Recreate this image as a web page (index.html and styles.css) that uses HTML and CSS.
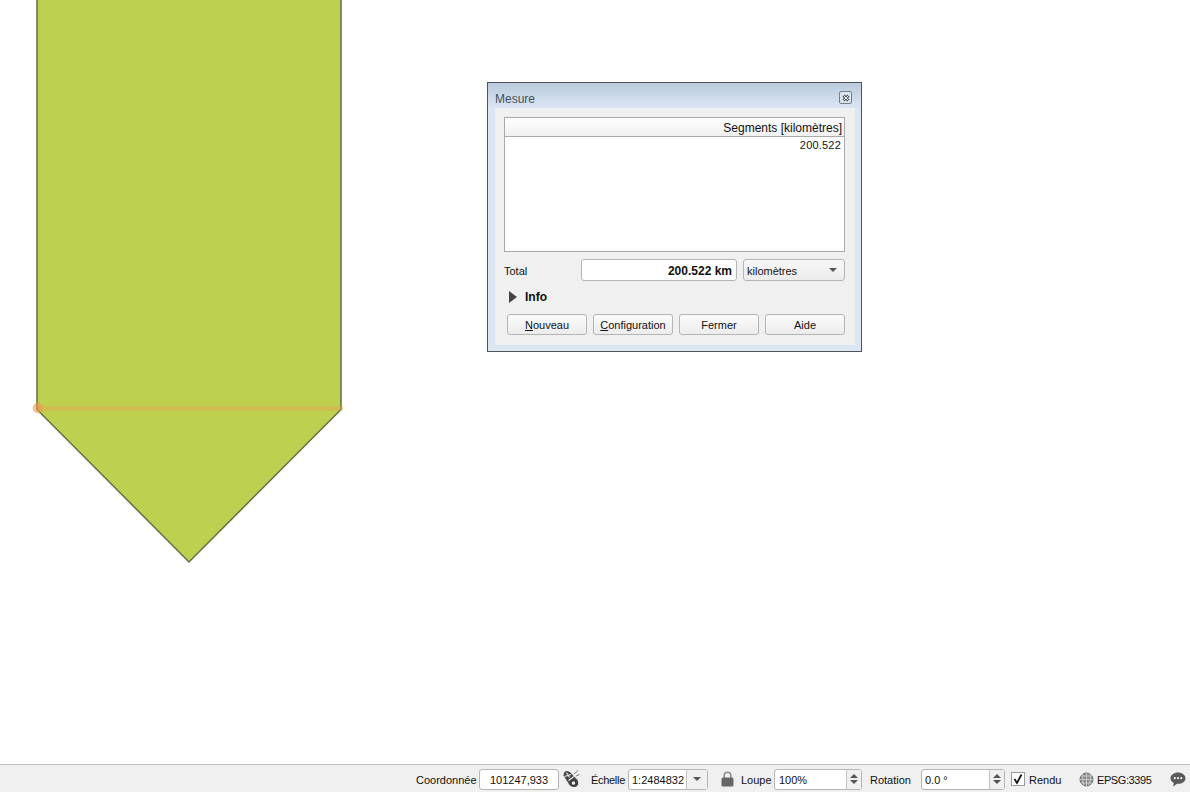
FILE: index.html
```html
<!DOCTYPE html>
<html lang="fr">
    <head>
        <meta charset="UTF-8">
        <meta name="viewport" content="width=device-width, initial-scale=1.0">
        <title>Mesure</title>
        <link rel="stylesheet" href="styles.css">
    </head>
    <body>
        <div class="canvas">
            <svg class="map" width="1190" height="764" viewBox="0 0 1190 764">
                <polygon points="37,-5 341,-5 341,409.500 189,562 37,409.500" fill="#bed04f" stroke="#666c45" stroke-width="1.500"/>
                <line x1="38" y1="408.500" x2="343" y2="408.500" stroke="#ed9b50" stroke-opacity="0.4" stroke-width="4"/>
                <circle cx="38" cy="408" r="5" fill="#ed9b50" fill-opacity="0.6" stroke="#ed9b50" stroke-opacity="0.4" stroke-width="1"/>
            </svg>

            <div class="window">
                <div class="titlebar">
                    <span class="title">Mesure</span>
                    <span class="close-btn">
                        <svg width="8" height="8" viewBox="0 0 8 8">
                            <path d="M1.500 1.500L6.500 6.500M6.500 1.500L1.500 6.500" stroke="#4f5a67" stroke-width="3"/>
                            <path d="M1.500 1.500L6.500 6.500M6.500 1.500L1.500 6.500" stroke="#f4f6f8" stroke-width="1"/>
                        </svg>
                    </span>
                </div>
                <div class="panel">
                    <div class="table">
                        <div class="table-head">Segments [kilomètres]</div>
                        <div class="table-row">200.522</div>
                    </div>
                    <div class="total-row">
                        <span class="total-label">Total</span>
                        <div class="total-value">200.522 km</div>
                        <div class="unit-combo">
                            <span>kilomètres</span>
                            <span class="arrow-down"></span>
                        </div>
                    </div>
                    <div class="info-row">
                        <span class="arrow-right"></span>
                        <span class="info-label">Info</span>
                    </div>
                    <div class="buttons">
                        <div class="btn"><span><u>N</u>ouveau</span></div>
                        <div class="btn"><span><u>C</u>onfiguration</span></div>
                        <div class="btn">Fermer</div>
                        <div class="btn">Aide</div>
                    </div>
                </div>
            </div>
        </div>

        <div class="statusbar">
            <span class="lbl lbl-coord">Coordonnée</span>
            <div class="field field-coord">101247,933</div>
            <svg class="icon icon-mouse" width="17" height="18" viewBox="0 0 17 18">
                <path d="M0.500 5.500Q0.500 2 3 1Q5.500 0.500 7.500 2.500L14.500 10Q16.500 14.500 13.500 16.500Q9 18 6.500 15Z" fill="#484848"/>
                <path d="M3.500 2.500L6.500 7.500M1.500 6.500L8 4.500M5.500 10.500L11 6.500" stroke="#e8e8e8" stroke-width="1.100" fill="none"/>
                <circle cx="10.500" cy="13" r="2.400" fill="#ececec" stroke="#333" stroke-width="1.100"/>
                <path d="M11 4L15 0.500M13 6L16.500 4.500" stroke="#777" stroke-width="1"/>
            </svg>
            <span class="lbl lbl-scale">Échelle</span>
            <div class="field field-scale">
                <span class="field-text">1:2484832</span>
                <span class="drop"><span class="arrow-down"></span></span>
            </div>
            <svg class="icon icon-lock" width="13" height="16" viewBox="0 0 13 16">
                <path d="M3.200 7V4.500a3.300 3.300 0 0 1 6.600 0V7" fill="none" stroke="#8a8a8a" stroke-width="1.600"/>
                <rect x="0.500" y="6.500" width="12" height="9" rx="1.500" fill="#666"/>
            </svg>
            <span class="lbl lbl-zoom">Loupe</span>
            <div class="field field-zoom">
                <span class="field-text">100%</span>
                <span class="spin"><span class="arrow-up"></span><span class="arrow-down"></span></span>
            </div>
            <span class="lbl lbl-rot">Rotation</span>
            <div class="field field-rot">
                <span class="field-text">0.0 °</span>
                <span class="spin"><span class="arrow-up"></span><span class="arrow-down"></span></span>
            </div>
            <span class="check">
                <svg width="12" height="12" viewBox="0 0 12 12"><path d="M2.500 6L5 10L9.500 1.500" fill="none" stroke="#111" stroke-width="1.700"/></svg>
            </span>
            <span class="lbl lbl-render">Rendu</span>
            <svg class="icon icon-globe" width="15" height="15" viewBox="0 0 15 15">
                <circle cx="7.500" cy="7.500" r="6.500" fill="#8c8c8c" stroke="#707070"/>
                <path d="M1 7.500H14M2 4H13M2 11H13M7.500 1V14M4 2Q2.500 7.500 5 13.500M11 2Q12.500 7.500 10 13.500" stroke="#dcdcdc" stroke-width="0.700" fill="none"/>
            </svg>
            <span class="lbl lbl-epsg">EPSG:3395</span>
            <svg class="icon icon-msg" width="16" height="15" viewBox="0 0 16 15">
                <path d="M8 0.500C3.800 0.500 0.500 3 0.500 6.200C0.500 8.200 1.800 9.900 3.800 10.900L3 14.500L7.200 11.800H8C12.200 11.800 15.500 9.400 15.500 6.200C15.500 3 12.200 0.500 8 0.500Z" fill="#5a5a5a"/>
                <circle cx="4.800" cy="6.200" r="1.100" fill="#f0f0f0"/>
                <circle cx="8" cy="6.200" r="1.100" fill="#f0f0f0"/>
                <circle cx="11.200" cy="6.200" r="1.100" fill="#f0f0f0"/>
            </svg>
        </div>
    </body>
</html>
```

FILE: styles.css
```css
* {
    box-sizing: border-box;
}

html, body {
    height: 100%;
}

body {
    margin: 0;
    display: flex;
    flex-direction: column;
    overflow: hidden;
    background-color: #fff;
    color: #111;
    font-family: "Liberation Sans", Arial, sans-serif;
    font-size: 11px;
}

.canvas {
    position: relative;
    height: 764px;
    flex: none;
}

.map {
    position: absolute;
    left: 0;
    top: 0;
}

/* floating dialog */
.window {
    position: absolute;
    left: 487px;
    top: 82px;
    width: 375px;
    height: 270px;
    border: 1px solid #4f5459;
    background-color: #dbe6f3;
    display: flex;
    flex-direction: column;
}

.titlebar {
    height: 25px;
    flex: none;
    display: flex;
    align-items: center;
    justify-content: space-between;
    padding: 8px 10px 2px 7px;
    background: linear-gradient(#b9cbdd, #dbe6f3);
}

.title {
    color: #47515c;
    font-size: 12px;
}

.close-btn {
    width: 13px;
    height: 13px;
    margin-top: -2px;
    margin-right: -1px;
    display: flex;
    align-items: center;
    justify-content: center;
    border: 1px solid #75808c;
    border-radius: 2px;
    background-color: #dbe4ee;
}

.panel {
    flex: 1;
    margin: 0 6px 6px 7px;
    padding: 9px 10px 10px 9px;
    background-color: #f0f0f0;
    display: flex;
    flex-direction: column;
}

.table {
    height: 135px;
    flex: none;
    border: 1px solid #a9a9a9;
    background-color: #fff;
}

.table-head {
    height: 19px;
    padding: 3px 2px 0 0;
    border-bottom: 1px solid #a9a9a9;
    background: linear-gradient(#fff, #f0f0f0);
    text-align: right;
    font-size: 12px;
}

.table-row {
    padding: 1px 3px 0 0;
    text-align: right;
    font-size: 11px;
    letter-spacing: 0.200px;
    line-height: 15px;
}

.total-row {
    display: flex;
    align-items: center;
    height: 22px;
    margin-top: 7px;
}

.total-label {
    width: 77px;
    padding-top: 2px;
}

.total-value {
    width: 156px;
    height: 22px;
    margin-right: 6px;
    padding: 1px 4px 0 0;
    border: 1px solid #b5b5b5;
    border-radius: 3px;
    background-color: #fff;
    text-align: right;
    font-weight: bold;
    font-size: 12px;
    line-height: 20px;
}

.unit-combo {
    width: 102px;
    height: 22px;
    padding: 2px 7px 0 3px;
    border: 1px solid #b5b5b5;
    border-radius: 3px;
    background: linear-gradient(#f8f8f8, #ececec);
    display: flex;
    align-items: center;
    justify-content: space-between;
}

.arrow-down {
    display: block;
    width: 0;
    height: 0;
    border-left: 4.500px solid transparent;
    border-right: 4.500px solid transparent;
    border-top: 4px solid #555;
}

.arrow-up {
    display: block;
    width: 0;
    height: 0;
    border-left: 4.500px solid transparent;
    border-right: 4.500px solid transparent;
    border-bottom: 4px solid #555;
}

.unit-combo .arrow-down {
    margin-top: -2px;
}

.arrow-right {
    display: block;
    width: 0;
    height: 0;
    margin-left: 5px;
    border-top: 6px solid transparent;
    border-bottom: 6px solid transparent;
    border-left: 8px solid #444;
}

.info-row {
    display: flex;
    align-items: center;
    height: 20px;
    margin-top: 6px;
}

.info-label {
    margin-left: 8px;
    font-weight: bold;
    font-size: 12px;
}

.buttons {
    display: flex;
    gap: 6px;
    margin-top: 7px;
    padding-left: 3px;
}

.btn {
    width: 80px;
    height: 21px;
    border: 1px solid #b5b5b5;
    border-radius: 3px;
    background: linear-gradient(#fbfbfb, #ececec);
    text-align: center;
    line-height: 20px;
}

/* bottom status bar */
.statusbar {
    height: 28px;
    flex: none;
    display: flex;
    align-items: center;
    padding: 1px 0 0 416px;
    border-top: 1px solid #c4c4c4;
    background-color: #f0f0f0;
}

.lbl {
    flex: none;
    padding-top: 2px;
    white-space: nowrap;
}

.field {
    flex: none;
    height: 21px;
    display: flex;
    align-items: center;
    justify-content: space-between;
    border: 1px solid #b5b5b5;
    border-radius: 3px;
    background-color: #fff;
}

.field-text {
    padding: 2px 0 0 3px;
}

.lbl-coord {
    width: 63px;
}

.field-coord {
    width: 80px;
    padding-top: 2px;
    justify-content: center;
}

.icon {
    flex: none;
}

.icon-mouse {
    margin-left: 4px;
}

.lbl-scale {
    width: 37px;
    margin-left: 11px;
    letter-spacing: -0.300px;
}

.field-scale {
    width: 80px;
}

.drop {
    width: 21px;
    height: 100%;
    display: flex;
    align-items: center;
    justify-content: center;
    border-left: 1px solid #c4c4c4;
    background-color: #f0f0f0;
}

.icon-lock {
    margin-left: 13px;
}

.lbl-zoom {
    width: 33px;
    margin-left: 7px;
}

.field-zoom {
    width: 88px;
}

.field-zoom .field-text {
    padding-left: 4px;
}

.spin {
    width: 15px;
    height: 100%;
    display: flex;
    flex-direction: column;
    align-items: center;
    justify-content: center;
    gap: 2px;
    border-left: 1px solid #c4c4c4;
    background-color: #f0f0f0;
}

.lbl-rot {
    width: 51px;
    margin-left: 8px;
}

.field-rot {
    width: 84px;
}

.check {
    flex: none;
    width: 14px;
    height: 14px;
    margin-left: 6px;
    display: flex;
    align-items: center;
    justify-content: center;
    border: 1px solid #9a9a9a;
    background-color: #fff;
}

.lbl-render {
    width: 40px;
    margin-left: 4px;
}

.icon-globe {
    margin-left: 10px;
}

.lbl-epsg {
    width: 73px;
    margin-left: 3px;
    letter-spacing: -0.400px;
}
```
